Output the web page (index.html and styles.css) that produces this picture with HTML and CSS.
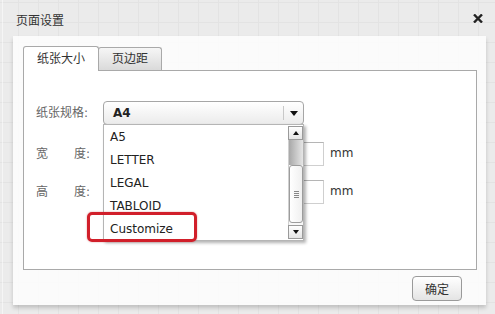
FILE: index.html
```html
<!DOCTYPE html>
<html lang="zh-CN">
<head>
    <meta charset="UTF-8">
    <meta name="viewport" content="width=device-width, initial-scale=1.0">
    <title>页面设置</title>
    <link rel="stylesheet" href="styles.css">
</head>
<body>
    <div class="dialog">
        <div class="titlebar">
            <span class="title">页面设置</span>
            <svg class="close" width="10" height="9" viewBox="0 0 10 9">
                <path d="M1 0.5 L9 8.5 M9 0.5 L1 8.5" stroke="#222" stroke-width="2.4" fill="none"/>
            </svg>
        </div>
        <div class="panel">
            <div class="tabs">
                <div class="tab active">纸张大小</div>
                <div class="tab">页边距</div>
            </div>
            <div class="tab-body">
                <div class="form-row">
                    <label class="field-label">纸张规格:</label>
                    <div class="select">
                        <span class="select-value">A4</span>
                        <span class="select-arrow"><i class="tri-down"></i></span>
                    </div>
                </div>
                <div class="form-row row-width">
                    <label class="field-label">宽<span class="gap"></span>度:</label>
                    <div class="text-input"></div>
                    <span class="unit">mm</span>
                </div>
                <div class="form-row row-height">
                    <label class="field-label">高<span class="gap"></span>度:</label>
                    <div class="text-input"></div>
                    <span class="unit">mm</span>
                </div>

                <!-- opened list of the select -->
                <div class="dropdown">
                    <ul class="options">
                        <li>A5</li>
                        <li>LETTER</li>
                        <li>LEGAL</li>
                        <li>TABLOID</li>
                        <li>Customize</li>
                    </ul>
                    <div class="scrollbar">
                        <div class="sb-btn"><i class="tri-up small"></i></div>
                        <div class="sb-track">
                            <div class="sb-fill"></div>
                            <div class="sb-thumb"><span class="grip"></span></div>
                        </div>
                        <div class="sb-btn"><i class="tri-down small"></i></div>
                    </div>
                </div>
                <div class="highlight"></div>
            </div>
            <div class="footer">
                <button class="btn" type="button">确定</button>
            </div>
        </div>
    </div>
</body>
</html>
```

FILE: styles.css
```css
html, body {
    margin: 0;
    padding: 0;
}
body {
    width: 495px;
    height: 314px;
    overflow: hidden;
    font-family: 'DejaVu Sans', 'Noto Sans CJK SC', sans-serif;
    font-size: 12px;
    color: #333;
    background-color: #ebebeb;
    background-image:
        linear-gradient(90deg, #e3e3e3 1px, transparent 1px),
        linear-gradient(180deg, #e3e3e3 1px, transparent 1px);
    background-size: 20px 20px;
    background-position: 18px 2px;
}
.dialog {
    height: 314px;
    display: flex;
    flex-direction: column;
    border-left: 1px solid rgba(255,255,255,0.5);
    margin-left: 2px;
}
.titlebar {
    height: 36px;
    flex: none;
    display: flex;
    align-items: center;
    justify-content: space-between;
    padding: 0 12px 0 13px;
    box-sizing: border-box;
}
.title {
    font-size: 12px;
    color: #333;
    margin-top: 2px;
}
.close {
    display: block;
    margin-top: 1px;
}
.panel {
    margin: 0 9px 0 10px;
    padding: 10px 9px 4px 10px;
    background: rgba(255,255,255,0.8);
    box-shadow: 0 3px 4px rgba(0,0,0,0.18);
}
.tabs {
    display: flex;
    align-items: flex-end;
    height: 24px;
}
.tab {
    box-sizing: border-box;
    height: 23px;
    width: 64px;
    margin-left: -1px;
    border: 1px solid #a9a9a9;
    border-bottom: none;
    border-radius: 3px 3px 0 0;
    background: linear-gradient(#f6f6f6, #dadada);
    text-align: center;
    line-height: 22px;
    font-size: 12px;
    color: #333;
}
.tab.active {
    margin-left: 0;
    width: 76px;
    height: 25px;
    margin-bottom: -1px;
    line-height: 24px;
    background: #fff;
    position: relative;
    z-index: 1;
}
.tab-body {
    position: relative;
    box-sizing: border-box;
    height: 200px;
    border: 1px solid #a9a9a9;
    background: #fff;
    padding: 30px 0 0 12px;
}
.form-row {
    display: flex;
    align-items: center;
    height: 24px;
}
.row-width {
    margin-top: 17px;
}
.row-height {
    margin-top: 14px;
}
.field-label {
    width: 67px;
    flex: none;
    color: #666;
    font-size: 12px;
    margin-bottom: 4px;
}
.gap {
    display: inline-block;
    width: 26px;
}
.select {
    box-sizing: border-box;
    width: 201px;
    height: 24px;
    display: flex;
    align-items: center;
    border: 1px solid #a6a6a6;
    border-radius: 4px;
    background: linear-gradient(#ffffff, #ebebeb);
}
.select-value {
    flex: 1;
    padding-left: 9px;
    font-weight: bold;
    color: #222;
}
.select-arrow {
    width: 19px;
    height: 14px;
    border-left: 1px solid #c8c8c8;
    display: flex;
    align-items: center;
    justify-content: center;
}
.tri-down, .tri-up {
    display: block;
    width: 0;
    height: 0;
    border-left: 4px solid transparent;
    border-right: 4px solid transparent;
}
.tri-down {
    border-top: 5px solid #111;
}
.tri-up {
    border-bottom: 5px solid #111;
}
.tri-down.small, .tri-up.small {
    border-left-width: 3px;
    border-right-width: 3px;
}
.tri-down.small { border-top-width: 4px; }
.tri-up.small { border-bottom-width: 4px; }
.text-input {
    box-sizing: border-box;
    width: 221px;
    height: 24px;
    border: 1px solid #cfcfcf;
    border-top-color: #b5b5b5;
    background: #fff;
}
.unit {
    margin-left: 6px;
    margin-bottom: 2px;
    color: #333;
}
.dropdown {
    position: absolute;
    left: 79px;
    top: 53px;
    width: 201px;
    height: 117px;
    box-sizing: border-box;
    border: 1px solid #b5b5b5;
    background: #fff;
    box-shadow: 2px 2px 3px rgba(0,0,0,0.3);
    overflow: hidden;
    z-index: 2;
}
.options {
    list-style: none;
    margin: 0;
    padding: 1px 0 0;
}
.options li {
    height: 23px;
    line-height: 23px;
    padding-left: 6px;
    color: #222;
    font-size: 12px;
}
.scrollbar {
    position: absolute;
    right: 0;
    top: 1px;
    bottom: 1px;
    width: 15px;
    display: flex;
    flex-direction: column;
}
.sb-btn {
    box-sizing: border-box;
    height: 14px;
    border: 1px solid #9a9a9a;
    background: linear-gradient(#fefefe, #e4e4e4);
    display: flex;
    align-items: center;
    justify-content: center;
}
.sb-track {
    flex: 1;
    display: flex;
    flex-direction: column;
    background: #f7f7f7;
    border-left: 1px solid #d0d0d0;
}
.sb-fill {
    height: 25px;
    background: linear-gradient(90deg, #a8a8a8, #e6e6e6);
}
.sb-thumb {
    box-sizing: border-box;
    height: 58px;
    border: 1px solid #9c9c9c;
    border-radius: 3px;
    background: linear-gradient(90deg, #ffffff, #f0f0f0);
    display: flex;
    align-items: center;
    justify-content: center;
}
.grip {
    width: 5px;
    height: 7px;
    background: repeating-linear-gradient(#888 0 1px, transparent 1px 2px);
}
.highlight {
    position: absolute;
    left: 63px;
    top: 141px;
    width: 110px;
    height: 30px;
    box-sizing: border-box;
    border: 3px solid #d11f2a;
    border-radius: 5px;
    box-shadow: 0 0 2px rgba(160,0,0,0.4);
    z-index: 3;
}
.footer {
    display: flex;
    justify-content: flex-end;
    padding: 6px 15px 0 0;
}
.btn {
    box-sizing: border-box;
    width: 50px;
    height: 25px;
    border: 1px solid #9a9a9a;
    border-radius: 4px;
    background: linear-gradient(#ffffff, #e4e4e4);
    font-family: 'Noto Sans CJK SC', sans-serif;
    font-size: 12px;
    color: #333;
    padding: 0;
    cursor: pointer;
}
```
